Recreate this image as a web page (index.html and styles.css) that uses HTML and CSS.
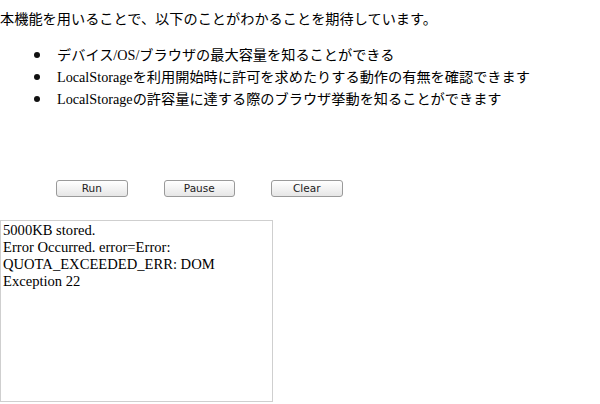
FILE: index.html
```html
<!DOCTYPE html>
<html lang="ja">
<head>
<meta charset="utf-8">
<link rel="stylesheet" href="styles.css">
</head>
<body>
<p class="intro">本機能を用いることで、以下のことがわかることを期待しています。</p>
<ul class="points">
  <li>デバイス/OS/ブラウザの最大容量を知ることができる</li>
  <li>LocalStorageを利用開始時に許可を求めたりする動作の有無を確認できます</li>
  <li>LocalStorageの許容量に達する際のブラウザ挙動を知ることができます</li>
</ul>
<div class="controls">
  <button class="btn">Run</button>
  <button class="btn">Pause</button>
  <button class="btn">Clear</button>
</div>
<textarea class="log">5000KB stored.
Error Occurred. error=Error: QUOTA_EXCEEDED_ERR: DOM Exception 22</textarea>
</body>
</html>
```
FILE: styles.css
```css
html, body {
  margin: 0;
  padding: 0;
  background: #fff;
}
body {
  font-family: "Liberation Serif", "Noto Sans CJK JP", serif;
  font-size: 14.2px;
  color: #000;
}
.intro {
  margin: 8px 0 0 0;
  line-height: 22px;
}
.points {
  margin: 14px 0 0 0;
  padding-left: 57px;
  line-height: 22px;
  list-style: none;
}
.points li {
  height: 22px;
}
.points li::before {
  content: "";
  display: inline-block;
  width: 6px;
  height: 6px;
  border-radius: 50%;
  background: #111;
  margin-left: -23px;
  margin-right: 17px;
  vertical-align: 2px;
}
.controls {
  display: flex;
  gap: 36px;
  margin: 70px 0 0 56px;
}
.btn {
  width: 71.5px;
  height: 17px;
  padding: 0;
  font-family: "DejaVu Sans", "Liberation Sans", sans-serif;
  font-size: 10.5px;
  color: #222;
  border: 1px solid #9a9a9a;
  border-radius: 3px;
  background: linear-gradient(#ffffff, #e6e6e6);
  line-height: 15px;
}
.log {
  display: block;
  margin: 23px 0 0 0;
  width: 273px;
  height: 182px;
  box-sizing: border-box;
  padding: 1px 2px;
  border: 1px solid #cfcfcf;
  font-family: "Liberation Serif", serif;
  font-size: 14.6px;
  line-height: 17px;
  color: #000;
  resize: none;
  outline: none;
}
```
